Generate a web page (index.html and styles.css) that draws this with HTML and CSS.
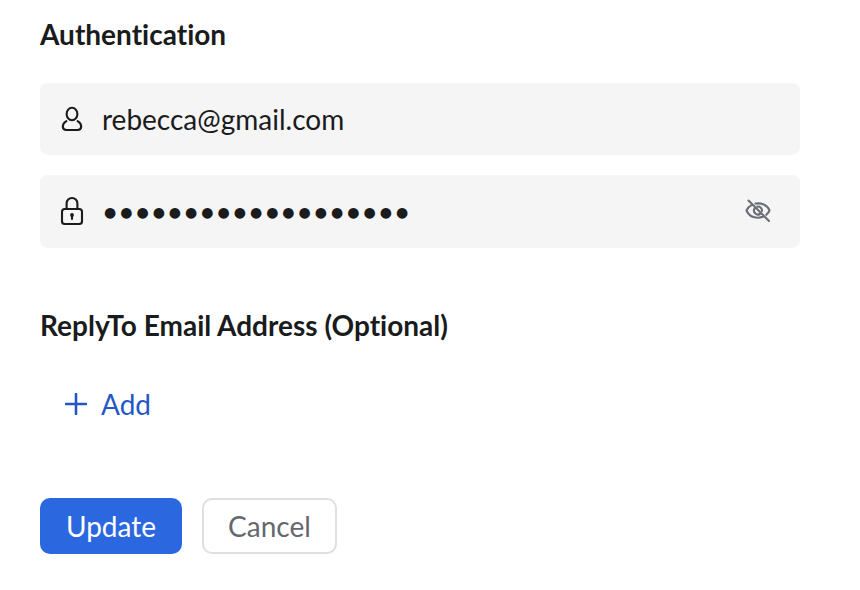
FILE: index.html
```html
<!DOCTYPE html>
<html lang="en">

<head>
  <meta charset="UTF-8">
  <meta name="viewport" content="width=device-width, initial-scale=1.0">
  <title>Email Settings</title>
  <link rel="stylesheet" href="styles.css">
</head>

<body>

  <form class="settings-form">
    <h2 class="section-title">Authentication</h2>

    <div class="field">
      <svg class="field-icon" width="24" height="28" viewBox="0 0 24 28">
        <ellipse cx="12" cy="9" rx="5.4" ry="6.2" />
        <path d="M6.4 16.2C4.2 17.4 2.8 19.2 2.8 21.6C2.8 23.8 4.2 25 6.4 25H17.6C19.8 25 21.2 23.8 21.2 21.6C21.2 19.2 19.8 17.4 17.6 16.2" />
      </svg>
      <span class="field-value">rebecca@gmail.com</span>
    </div>

    <div class="field password">
      <svg class="field-icon" width="24" height="31" viewBox="0 0 24 31">
        <rect x="2" y="13" width="20" height="15" rx="2.8" />
        <path d="M6.6 13V7.4A5.4 5.4 0 0 1 17.4 7.4V13M12 19V23" />
        <circle class="solid" cx="12" cy="19" r="1.9" />
      </svg>
      <span class="field-value dots">●●●●●●●●●●●●●●●●●●●</span>
      <svg class="eye-icon" width="28" height="25" viewBox="0 0 28 25">
        <path d="M7.5 6.1C5.2 7.3 3.4 9.3 2.5 11.5C4.4 16.2 8.7 18.7 14 18.7C15.8 18.7 17.5 18.4 19 17.8M11.5 4.6C18 3.6 23.7 6.3 25.5 11.5C24.8 13.2 23.7 14.6 22.3 15.8M10.6 9.4A4 4 0 0 0 16 15M13.5 7.6A4 4 0 0 1 18 12M4.5 1.5L25 22" />
      </svg>
    </div>

    <h2 class="section-title reply-title">ReplyTo Email Address (Optional)</h2>

    <button type="button" class="add-button">
      <svg class="plus-icon" width="22" height="22" viewBox="0 0 22 22">
        <path d="M11 1V21M1 11H21" />
      </svg>
      Add
    </button>

    <div class="actions">
      <button type="button" class="button primary">Update</button>
      <button type="button" class="button secondary">Cancel</button>
    </div>
  </form>

</body>

</html>
```
FILE: styles.css
```css
body {
  margin: 0;
  background-color: #fff;
  color: #1a1b1d;
  font-family: Lato, sans-serif;
  font-size: 28px;
  font-variant-ligatures: none;
}

.settings-form {
  width: 760px;
  padding: 17px 40px 0;
}

.section-title {
  margin: 0 0 32px;
  font-size: 28px;
  line-height: 34px;
  font-weight: 700;
}

.field {
  display: flex;
  align-items: center;
  box-sizing: border-box;
  height: 72px;
  margin-bottom: 20px;
  padding: 0 28px 0 20px;
  border-radius: 8px;
  background-color: #f5f5f5;
}

.password {
  height: 73px;
}

.field svg,
.plus-icon {
  flex: none;
  fill: none;
  stroke: currentColor;
  stroke-width: 2.1;
  stroke-linecap: round;
}

.plus-icon {
  stroke-width: 2.6;
}

.field .solid {
  fill: currentColor;
  stroke: none;
}

.field-value {
  flex: 1;
  margin-left: 18px;
  line-height: 34px;
}

.dots {
  padding: 1px 0 0 2px;
  font-family: "DejaVu Sans", sans-serif;
  font-size: 14px;
  letter-spacing: 4px;
}

.field .eye-icon {
  color: #6b6e76;
}

.reply-title {
  margin-top: 60px;
  margin-bottom: 45px;
}

.add-button {
  display: flex;
  align-items: center;
  gap: 14px;
  margin: 0 0 77px;
  padding: 0 25px;
  border: none;
  background: none;
  color: #2457c5;
  font: inherit;
  line-height: 34px;
  cursor: pointer;
}

.actions {
  display: flex;
  gap: 20px;
}

.button {
  box-sizing: border-box;
  height: 56px;
  padding: 0;
  border: none;
  border-radius: 10px;
  font: inherit;
  cursor: pointer;
}

.primary {
  width: 142px;
  background-color: #2b67df;
  color: #fff;
}

.secondary {
  width: 135px;
  border: 2px solid #dedfe0;
  background-color: #fff;
  color: #65676e;
}
```
